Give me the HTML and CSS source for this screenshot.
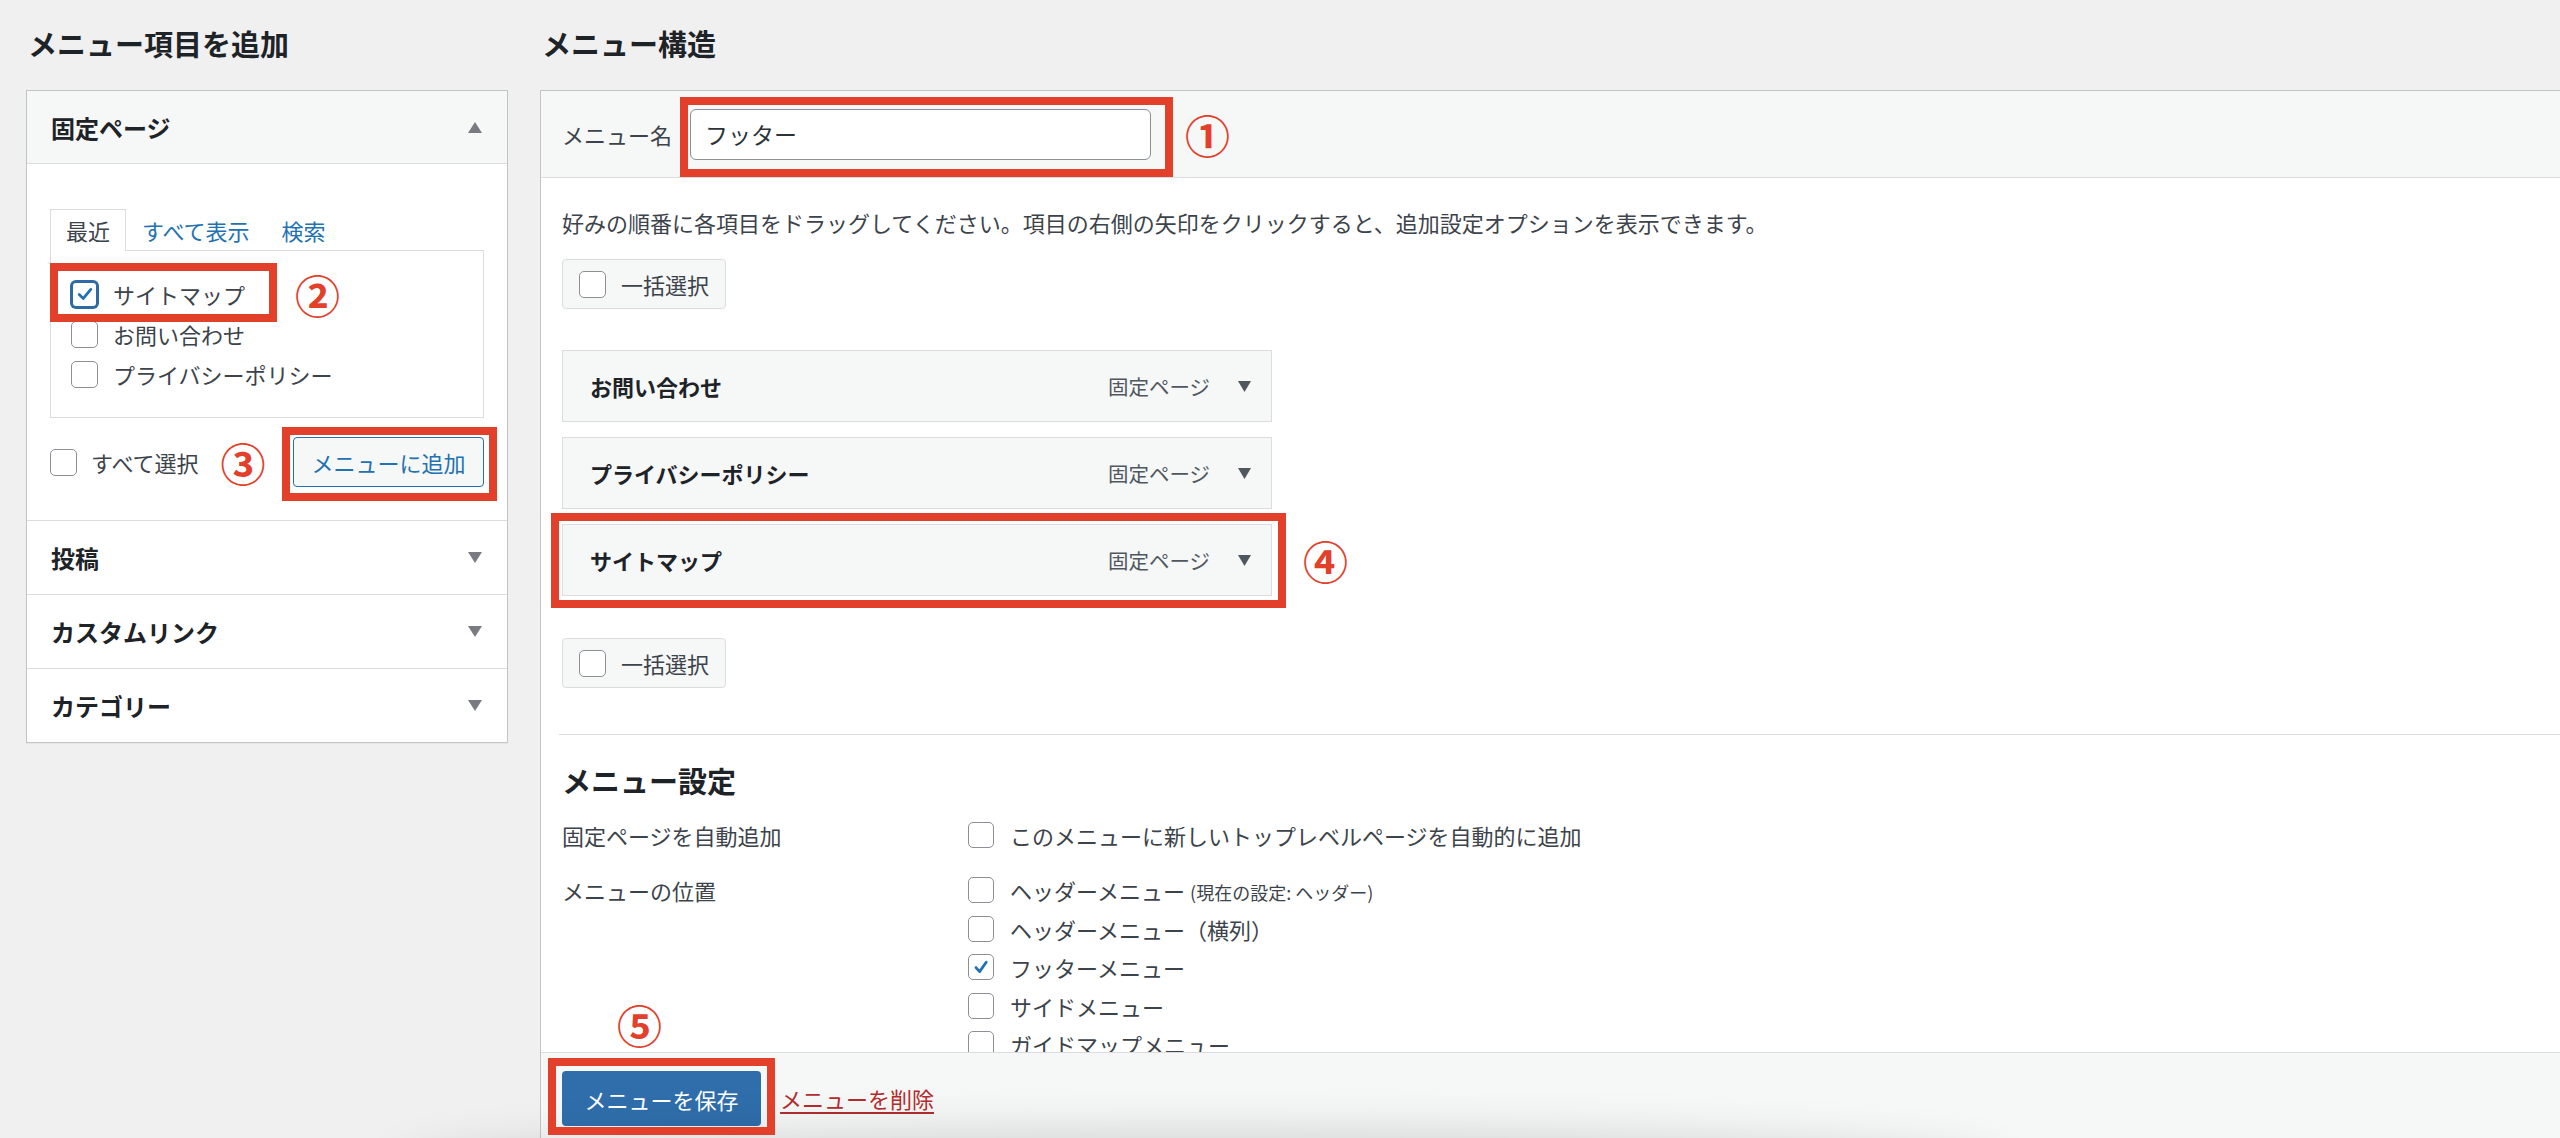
FILE: index.html
```html
<!DOCTYPE html>
<html lang="ja">
<head>
<meta charset="utf-8">
<title>メニュー</title>
<link rel="stylesheet" href="styles.css">
</head>
<body>
<div class="page">
  <div class="col-left">
    <h2 class="col-title">メニュー項目を追加</h2>
    <div class="accordion">
      <div class="acc-sec open">
        <div class="acc-head">
          <span>固定ページ</span>
          <svg class="tri" width="14" height="11" viewBox="0 0 14 11"><path d="M7 0L14 11H0Z"/></svg>
        </div>
        <div class="acc-body">
          <div class="tabs">
            <span class="tab active">最近</span>
            <span class="tab">すべて表示</span>
            <span class="tab">検索</span>
          </div>
          <div class="tab-panel">
            <div class="chk-row">
              <span class="hl hl-2"></span>
              <span class="cb cb-focus"><svg width="20" height="20" viewBox="0 0 20 20"><path d="M4.2 10.4L8.3 14.4L15.8 5.4"/></svg></span>
              <span>サイトマップ</span>
              <span class="num num-2">②</span>
            </div>
            <div class="chk-row">
              <span class="cb"></span>
              <span>お問い合わせ</span>
            </div>
            <div class="chk-row">
              <span class="cb"></span>
              <span>プライバシーポリシー</span>
            </div>
          </div>
          <div class="add-row">
            <span class="cb"></span>
            <span class="add-lbl">すべて選択</span>
            <span class="num num-3">③</span>
            <span class="btn-add">
              <span class="hl hl-3"></span>
              メニューに追加
            </span>
          </div>
        </div>
      </div>
      <div class="acc-sec">
        <div class="acc-head">
          <span>投稿</span>
          <svg class="tri" width="14" height="11" viewBox="0 0 14 11"><path d="M0 0H14L7 11Z"/></svg>
        </div>
      </div>
      <div class="acc-sec">
        <div class="acc-head">
          <span>カスタムリンク</span>
          <svg class="tri" width="14" height="11" viewBox="0 0 14 11"><path d="M0 0H14L7 11Z"/></svg>
        </div>
      </div>
      <div class="acc-sec">
        <div class="acc-head">
          <span>カテゴリー</span>
          <svg class="tri" width="14" height="11" viewBox="0 0 14 11"><path d="M0 0H14L7 11Z"/></svg>
        </div>
      </div>
    </div>
  </div>

  <div class="col-right">
    <h2 class="col-title">メニュー構造</h2>
    <div class="menu-panel">
      <div class="menu-head">
        <span class="name-lbl">メニュー名</span>
        <span class="name-input">
          <span class="hl hl-1"></span>
          フッター
        </span>
        <span class="num num-1">①</span>
      </div>
      <div class="menu-body">
        <p class="desc">好みの順番に各項目をドラッグしてください。項目の右側の矢印をクリックすると、追加設定オプションを表示できます。</p>
        <div class="bulk"><span class="cb"></span><span>一括選択</span></div>
        <ul class="items">
          <li class="item">
            <span class="item-title">お問い合わせ</span>
            <span class="item-type">固定ページ</span>
            <svg class="itri" width="13" height="11" viewBox="0 0 13 11"><path d="M0 0H13L6.5 11Z"/></svg>
          </li>
          <li class="item">
            <span class="item-title">プライバシーポリシー</span>
            <span class="item-type">固定ページ</span>
            <svg class="itri" width="13" height="11" viewBox="0 0 13 11"><path d="M0 0H13L6.5 11Z"/></svg>
          </li>
          <li class="item">
            <span class="hl hl-4"></span>
            <span class="item-title">サイトマップ</span>
            <span class="item-type">固定ページ</span>
            <svg class="itri" width="13" height="11" viewBox="0 0 13 11"><path d="M0 0H13L6.5 11Z"/></svg>
            <span class="num num-4">④</span>
          </li>
        </ul>
        <div class="bulk bulk-2"><span class="cb"></span><span>一括選択</span></div>

        <div class="settings">
          <h3 class="set-title">メニュー設定</h3>
          <div class="set-row">
            <div class="set-lbl">固定ページを自動追加</div>
            <div class="set-opts">
              <div class="opt"><span class="cb cb-sm"></span><span>このメニューに新しいトップレベルページを自動的に追加</span></div>
            </div>
          </div>
          <div class="set-row set-row-2">
            <div class="set-lbl">メニューの位置</div>
            <div class="set-opts">
              <div class="opt"><span class="cb cb-sm"></span><span>ヘッダーメニュー <span class="note">(現在の設定: ヘッダー)</span></span></div>
              <div class="opt"><span class="cb cb-sm"></span><span>ヘッダーメニュー（横列）</span></div>
              <div class="opt"><span class="cb cb-sm"><svg width="20" height="20" viewBox="0 0 20 20"><path d="M5 10.6L8.6 14.6L15.2 5.2"/></svg></span><span>フッターメニュー</span></div>
              <div class="opt"><span class="cb cb-sm"></span><span>サイドメニュー</span></div>
              <div class="opt"><span class="cb cb-sm"></span><span>ガイドマップメニュー</span></div>
            </div>
          </div>
        </div>
      </div>
      <div class="menu-foot">
        <span class="btn-save">
          <span class="hl hl-5"></span>
          <span class="num num-5">⑤</span>
          メニューを保存
        </span>
        <span class="del-link">メニューを削除</span>
      </div>
    </div>
  </div>
</div>
<div class="shade"></div>
</body>
</html>
```

FILE: styles.css
```css
* { box-sizing: border-box; }
html, body { margin: 0; height: 100%; overflow: hidden; }
body {
  background: #f0f0f1;
  font-family: "Noto Sans CJK JP", "Noto Sans", sans-serif;
  font-size: 22px;
  color: #3c434a;
}
.page {
  display: flex;
  align-items: flex-start;
  gap: 32px;
  padding-left: 26px;
}
.col-left { width: 482px; flex: none; }
.col-right { width: 2060px; flex: none; }
.col-title {
  margin: 23px 0 27px 0;
  padding-left: 2px;
  font-size: 29px;
  line-height: 40px;
  font-weight: 700;
  color: #1d2327;
}

/* red annotation */
.hl {
  position: absolute;
  border: 8px solid #e2402a;
  pointer-events: none;
  z-index: 5;
}
.num {
  color: #e2402a;
  font-size: 45px;
  line-height: 1;
  font-weight: 700;
  flex: none;
}

/* checkbox */
.cb {
  width: 27px;
  height: 27px;
  border: 1px solid #8c8f94;
  border-radius: 5px;
  background: #fff;
  flex: none;
  display: inline-flex;
  align-items: center;
  justify-content: center;
}
.cb svg path { fill: none; stroke: #2271b1; stroke-width: 2.8; stroke-linecap: round; stroke-linejoin: round; }
.cb-focus { border: 2px solid #2d6aa6; box-shadow: 0 0 0 1px #2d6aa6; }
.cb-sm { width: 26px; height: 26px; }

/* accordion */
.accordion {
  background: #fff;
  border: 1px solid #c3c4c7;
  box-shadow: 0 1px 1px rgba(0,0,0,.04);
}
.acc-sec + .acc-sec { border-top: 1px solid #dcdcde; }
.acc-head {
  height: 73px;
  display: flex;
  align-items: center;
  justify-content: space-between;
  padding: 0 25px 0 24px;
  font-size: 24px;
  font-weight: 700;
  color: #1d2327;
}
.open .acc-head { background: #f6f7f7; border-bottom: 1px solid #dcdcde; }
.tri path { fill: #787c82; }
.acc-body { height: 356px; padding: 45px 23px 0 23px; }
.tabs { display: flex; align-items: flex-end; height: 41px; }
.tab {
  padding: 0 16px;
  line-height: 40px;
  color: #2271b1;
}
.tab.active {
  height: 42px;
  margin-bottom: -1px;
  padding: 0 15px;
  border: 1px solid #dcdcde;
  border-bottom: none;
  background: #fff;
  color: #3c434a;
  position: relative;
  z-index: 1;
}
.tab-panel { border: 1px solid #dcdcde; padding: 23px 0 23px 20px; }
.chk-row {
  position: relative;
  display: flex;
  align-items: center;
  gap: 15px;
  height: 40px;
}
.hl-2 { left: -21px; top: -11px; width: 227px; height: 59px; }
.num-2 { margin-left: 35px; }
.add-row {
  display: flex;
  align-items: center;
  height: 50px;
  margin-top: 19px;
}
.add-lbl { margin-left: 14px; }
.num-3 { margin-left: 22px; }
.btn-add {
  position: relative;
  margin-left: auto;
  width: 191px;
  height: 50px;
  border: 1px solid #2271b1;
  border-radius: 4px;
  background: #f6f7f7;
  color: #2271b1;
  display: flex;
  align-items: center;
  justify-content: center;
}
.hl-3 { left: -12px; right: -14px; top: -11px; bottom: -15px; }

/* right panel */
.menu-panel { background: #fff; border: 1px solid #c3c4c7; }
.menu-head {
  height: 87px;
  display: flex;
  align-items: center;
  padding-left: 21px;
  background: #f6f7f7;
  border-bottom: 1px solid #dcdcde;
}
.name-lbl { color: #3c434a; }
.name-input {
  position: relative;
  margin-left: 18px;
  width: 461px;
  height: 51px;
  border: 1px solid #8c8f94;
  border-radius: 6px;
  background: #fff;
  padding-left: 14px;
  font-size: 23px;
  color: #2c3338;
  display: flex;
  align-items: center;
}
.hl-1 { left: -11px; right: -23px; top: -13px; bottom: -18px; }
.num-1 { margin-left: 34px; }

.menu-body {
  height: 874px;
  overflow: hidden;
  padding-left: 21px;
}
.desc { margin: 28px 0 0; line-height: 32px; }
.bulk {
  display: flex;
  align-items: center;
  gap: 15px;
  width: 164px;
  height: 50px;
  margin-top: 21px;
  padding-left: 16px;
  border: 1px solid #dcdcde;
  border-radius: 4px;
  background: #f6f7f7;
}
.bulk-2 { margin-top: 42px; }
.items { list-style: none; margin: 41px 0 0; padding: 0; }
.item {
  position: relative;
  width: 710px;
  height: 72px;
  display: flex;
  align-items: center;
  padding: 0 20px 0 27px;
  border: 1px solid #dcdcde;
  background: #f6f7f7;
}
.item + .item { margin-top: 15px; }
.item-title { flex: 1; font-weight: 700; color: #1d2327; }
.item-type { font-size: 20.5px; color: #50575e; margin-right: 28px; }
.itri path { fill: #50575e; }
.hl-4 { left: -12px; right: -15px; top: -12px; bottom: -13px; }
.num-4 { position: absolute; left: calc(100% + 32px); top: 50%; transform: translateY(-50%); }

.settings {
  margin-top: 46px;
  margin-left: -3px;
  padding-left: 3px;
  border-top: 1px solid #dcdcde;
}
.set-title {
  margin: 25px 0 0;
  font-size: 29px;
  line-height: 40px;
  font-weight: 700;
  color: #1d2327;
}
.set-row { display: flex; margin-top: 15px; }
.set-row-2 { margin-top: 16px; }
.set-lbl { width: 406px; flex: none; line-height: 40px; }
.set-row-2 .set-lbl { line-height: 38.5px; }
.opt { display: flex; align-items: center; gap: 16px; height: 40px; }
.set-row-2 .opt { height: 38.5px; }
.note { font-size: 18px; }

.menu-foot {
  position: relative;
  height: 200px;
  display: flex;
  align-items: flex-start;
  padding: 18px 0 0 21px;
  border-top: 1px solid #dcdcde;
  background: #f6f7f7;
}
.btn-save {
  position: relative;
  width: 199px;
  height: 55px;
  border-radius: 4px;
  background: #2f6eab;
  color: #fff;
  display: flex;
  align-items: center;
  justify-content: center;
}
.hl-5 { left: -14px; right: -14px; top: -13px; bottom: -9px; }
.num-5 { position: absolute; left: 55px; top: -69px; }
.del-link {
  margin-left: 19px;
  line-height: 55px;
  color: #b32d2e;
  text-decoration: underline;
  text-underline-offset: 4px;
}

.shade {
  position: fixed;
  left: 420px;
  width: 1560px;
  top: 1158px;
  height: 30px;
  border-radius: 50%;
  box-shadow: 0 0 50px 24px rgba(0,0,0,.16);
  pointer-events: none;
}
```
